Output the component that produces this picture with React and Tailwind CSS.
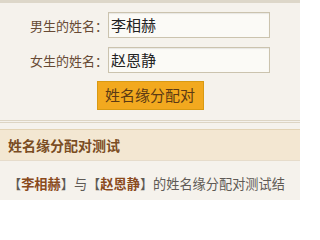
import React from 'react'

const font = { fontFamily: '"Noto Sans CJK SC", "Noto Sans", sans-serif' }

function NameRow({ label, value }) {
  return (
    <div className="flex items-center justify-center">
      <label className="w-[78px] text-right text-[13px] leading-none text-[#674a34]">{label}</label>
      <div className="flex h-[26px] w-[162px] items-center border border-[#cbc3ae] bg-[#fbfaf6] px-[2px] text-[15px] text-[#222] shadow-[inset_0_1px_1px_rgba(0,0,0,0.08)]">
        {value}
      </div>
    </div>
  )
}

export default function App() {
  return (
    <div className="h-[200px] w-[300px] overflow-hidden bg-[#f5f2ec]" style={font}>
      <div className="h-[3px] bg-[#ddd7c9]"></div>

      <div className="mt-[9px] flex flex-col gap-[9px]">
        <NameRow label="男生的姓名：" value="李相赫" />
        <NameRow label="女生的姓名：" value="赵恩静" />
      </div>

      <div className="mt-[8px] flex justify-center">
        <button className="h-[29px] w-[107px] border border-[#d99a12] bg-[#f2a91f] text-[15px] text-[#5c3a14]">
          姓名缘分配对
        </button>
      </div>

      <div className="mt-[10px] h-[3px] border-t border-b border-[#ddd5c4]"></div>

      <div className="mt-[6px] border-t border-[#e3d3b4]">
        <div className="flex h-[31px] items-center border-b border-[#e6dccb] bg-[#f3e7d2] px-[8px] text-[14px] font-bold text-[#7a4c22]">
          姓名缘分配对测试
        </div>
        <p className="px-[8px] pt-[12px] text-[13.2px] leading-[22px] text-[#5f5a55]">
          【<b className="text-[#8a4a1c]">李相赫</b>】与【<b className="text-[#8a4a1c]">赵恩静</b>】的姓名缘分配对测试结果
        </p>
      </div>
    </div>
  )
}
